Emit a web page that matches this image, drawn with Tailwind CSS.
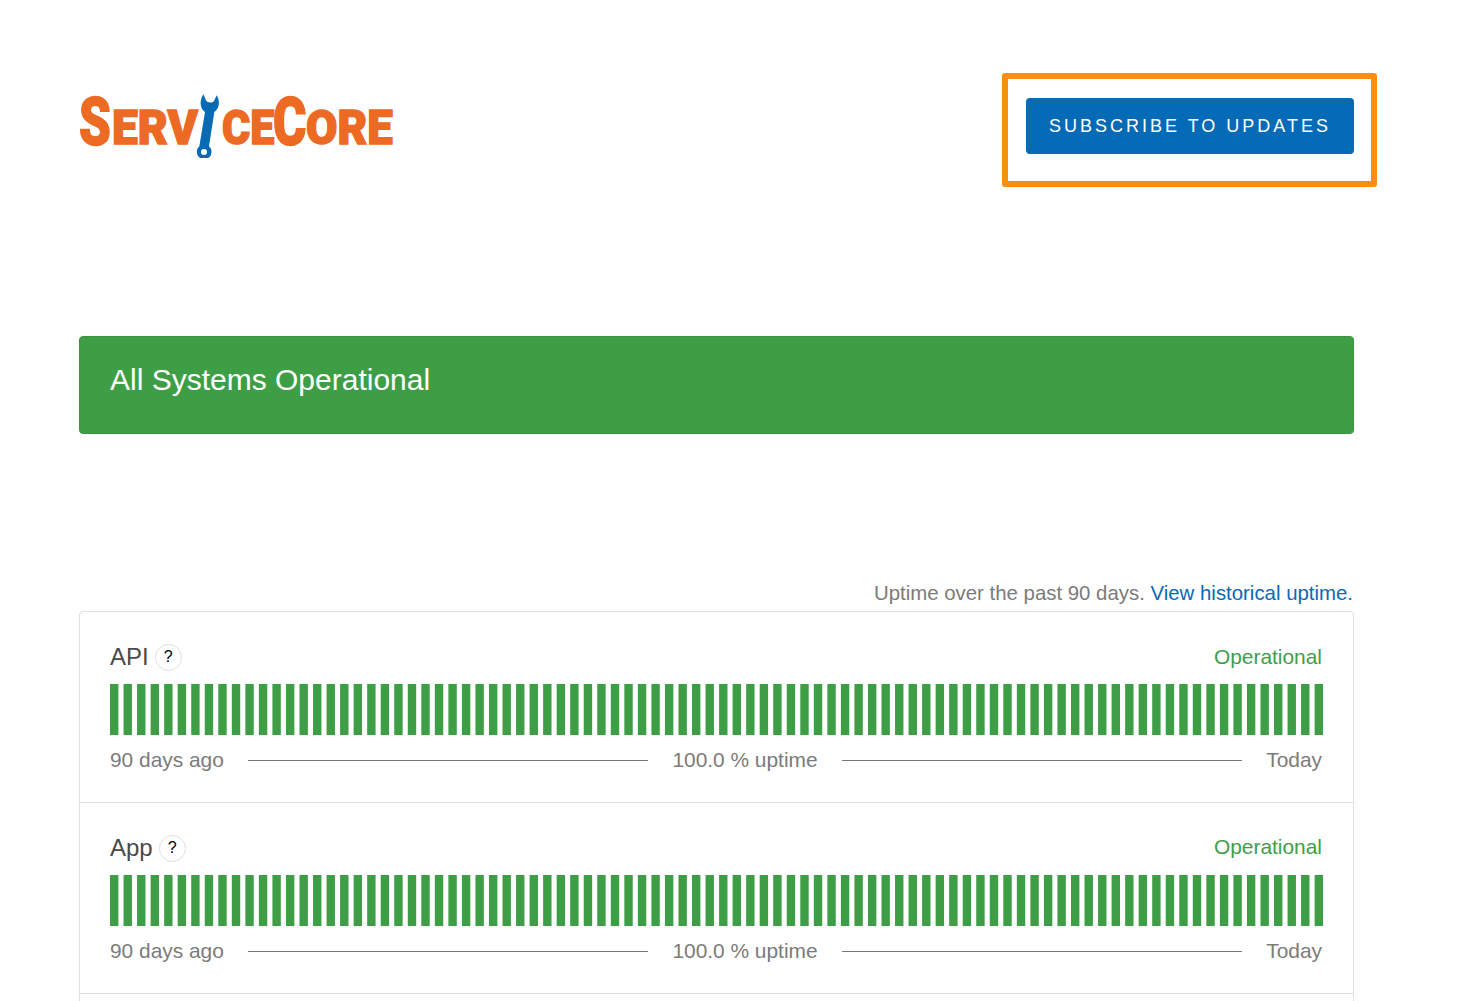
<!DOCTYPE html>
<html lang="en">
<head>
    <meta charset="UTF-8">
    <meta name="viewport" content="width=device-width, initial-scale=1.0">
    <title>ServiceCore Status</title>
    <script src="https://cdn.jsdelivr.net/npm/@tailwindcss/browser@4"></script>
</head>
<body class="relative h-[1001px] overflow-hidden bg-white font-['Liberation_Sans',Arial,sans-serif] text-[#7b7b7b]">

    <div class="ml-[79px] w-[1275px]">
        <!-- Header -->
        <header class="flex h-[336px] items-start justify-between">
            <div class="mt-[95px] flex h-[64px] w-[316px] items-start font-['Roboto',sans-serif] font-black leading-none text-[#ec6a23] [-webkit-text-stroke:1.5px_#ec6a23]">
                <span class="mt-[-6px] block h-[64px] w-[33px] origin-left scale-x-[.76] text-[67px]">S</span>
                <span class="mt-[8px] block h-[50px] w-[84px] origin-left scale-x-[.94] whitespace-nowrap text-[49px]">ERV</span>
                <svg class="ml-[-1px] mt-[-3px] h-[66px] w-[27px] shrink-0" viewBox="375 20 81 198">
                    <path fill="#066ab5" fill-rule="evenodd" d="M405 80C392 72 386 50 400 27L408 45C410 52 425 55 432 47L440 30C452 50 447 70 433 80L417 183A22 22 0 1 1 388 183ZM402 191A9 9 0 1 0 402 209A9 9 0 1 0 402 191Z"/>
                </svg>
                <span class="mt-[8px] block h-[50px] w-[51px] origin-left scale-x-[.88] whitespace-nowrap text-[49px]">CE</span>
                <span class="mt-[-6px] block h-[64px] w-[33px] origin-left scale-x-[.76] text-[67px]">C</span>
                <span class="mt-[8px] block h-[50px] w-[89px] origin-left scale-x-[.93] whitespace-nowrap text-[49px]">ORE</span>
            </div>
            <button class="mt-[98px] h-[56px] w-[328px] rounded-[4px] bg-[#066bb6] text-[18px] tracking-[3px] text-white">SUBSCRIBE TO UPDATES</button>
        </header>

        <!-- Page status -->
        <div class="h-[98px] rounded-[4px] border border-[#3a9440] bg-[#3e9e46] pl-[30px] pt-[25px] text-[30px] leading-[36px] text-white">All Systems Operational</div>

        <!-- Components -->
        <p class="mt-[147px] h-[30px] pr-[1px] text-right text-[20.4px] leading-[24px]">Uptime over the past 90 days. <a href="#" class="text-[#0a6ab5]">View historical uptime.</a></p>

        <div class="h-[500px] rounded-[4px] border border-[#e0e0e0]">
            <div class="h-[191px] border-b border-[#e0e0e0] px-[30px] pt-[30px]">
                <div class="flex h-[30px] items-center justify-between">
                    <div class="flex items-center text-[24px] text-[#4a4a4a]">API<span class="ml-[6px] flex h-[27px] w-[27px] items-center justify-center rounded-full border border-[#e0e0e0] text-[16px] text-black">?</span></div>
                    <span class="mr-[1px] text-[20.9px] text-[#3e9e46]">Operational</span>
                </div>
                <svg class="bars mt-[12px] block h-[51px] w-[1213px]" viewBox="0 0 1213 51"></svg>
                <div class="mt-[12px] flex h-[26px] items-center text-[20.9px]">
                    <span class="w-[138px]">90 days ago</span>
                    <span class="h-px w-[400px] bg-[#777777]"></span>
                    <span class="w-[194px] whitespace-nowrap text-center">100.0 % uptime</span>
                    <span class="h-px w-[400px] bg-[#777777]"></span>
                    <span class="flex-1 pr-[1px] text-right">Today</span>
                </div>
            </div>
            <div class="h-[191px] border-b border-[#e0e0e0] px-[30px] pt-[30px]">
                <div class="flex h-[30px] items-center justify-between">
                    <div class="flex items-center text-[24px] text-[#4a4a4a]">App<span class="ml-[6px] flex h-[27px] w-[27px] items-center justify-center rounded-full border border-[#e0e0e0] text-[16px] text-black">?</span></div>
                    <span class="mb-[2px] mr-[1px] text-[20.9px] text-[#3e9e46]">Operational</span>
                </div>
                <svg class="bars mt-[12px] block h-[51px] w-[1213px]" viewBox="0 0 1213 51"></svg>
                <div class="mt-[12px] flex h-[26px] items-center text-[20.9px]">
                    <span class="w-[138px]">90 days ago</span>
                    <span class="h-px w-[400px] bg-[#777777]"></span>
                    <span class="w-[194px] whitespace-nowrap text-center">100.0 % uptime</span>
                    <span class="h-px w-[400px] bg-[#777777]"></span>
                    <span class="flex-1 pr-[1px] text-right">Today</span>
                </div>
            </div>
        </div>
    </div>

    <!-- Highlight drawn over the page -->
    <div class="absolute left-[1002px] top-[73px] h-[114px] w-[375px] rounded-[3px] border-[6px] border-[#f98e10]"></div>

    <script>
        // 90 daily uptime bars
        let rects = '';
        for (let i = 0; i < 90; i++) {
            rects += `<rect x="${(i * 13.535).toFixed(2)}" width="8.4" height="51" fill="#3e9e46"></rect>`;
        }
        document.querySelectorAll('.bars').forEach(svg => svg.innerHTML = rects);
    </script>
</body>
</html>
